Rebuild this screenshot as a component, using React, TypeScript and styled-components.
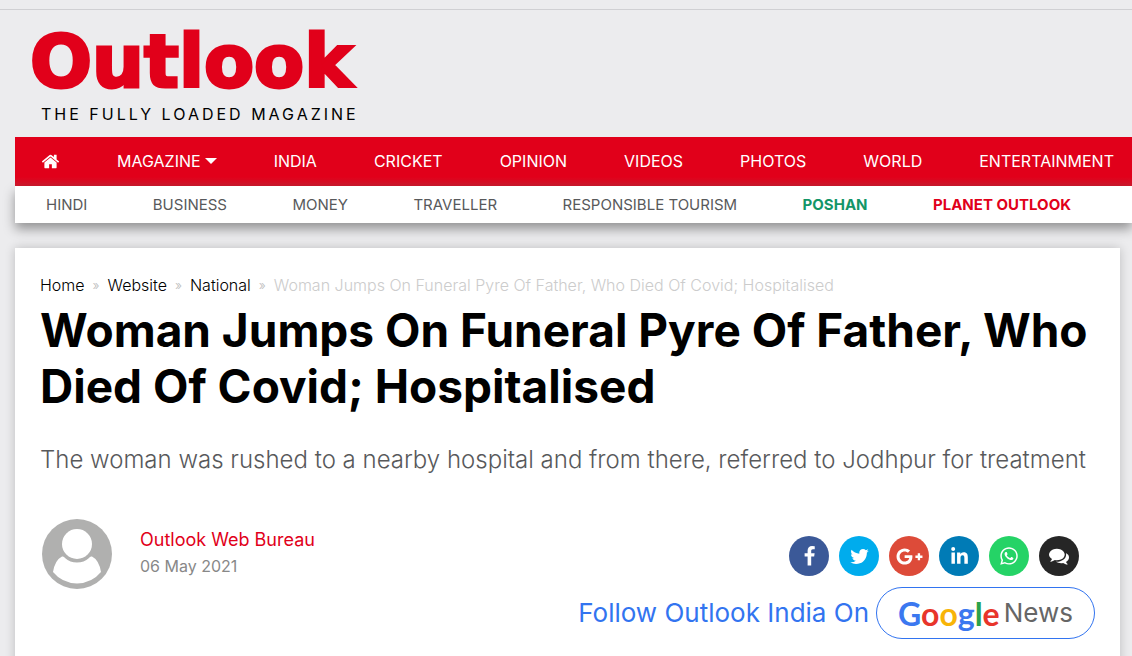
import React from "react";
import styled, { createGlobalStyle } from "styled-components";
import { FaGooglePlusG, FaLinkedinIn, FaWhatsapp } from "react-icons/fa";

const GlobalStyle = createGlobalStyle`
  *, *::before, *::after { box-sizing: border-box; }
  body {
    margin: 0;
    background: #ececee;
    color: #000;
    font-family: Inter, "Liberation Sans", sans-serif;
    overflow-x: hidden;
  }
  a { color: inherit; text-decoration: none; }
  h1, p, ol, ul { margin: 0; padding: 0; }
  ol, ul { list-style: none; }
`;

const TopStrip = styled.div`
  height: 10px;
  border-bottom: 1px solid #d0d0d3;
`;

const Masthead = styled.header`
  display: flex;
  flex-direction: column;
  align-items: flex-start;
  height: 127px;
  padding: 16px 0 0 30px;
`;

const Logo = styled.a`
  color: #e1001a;
  font-family: "DejaVu Sans", Inter, sans-serif;
  font-size: 73px;
  font-weight: 700;
  line-height: 72px;
  -webkit-text-stroke: 3px #e1001a;
`;

const Tagline = styled.p`
  padding-left: 11px;
  font-size: 16px;
  line-height: 32px;
  letter-spacing: 3px;
`;

const MainNav = styled.nav`
  margin-left: 15px;
  padding: 0 18px 0 26px;
  background: linear-gradient(#e1001a 40px, #cf1a2e 49px);
  color: #fff;
`;

const NavList = styled.ul<{ $height: number; $size: number }>`
  display: flex;
  align-items: center;
  justify-content: space-between;
  height: ${(p) => p.$height}px;
  padding-bottom: 1px;
  font-size: ${(p) => p.$size}px;
  white-space: nowrap;
`;

const NavLink = styled.a<{ $tone?: string }>`
  display: flex;
  align-items: center;
  gap: 4px;
  color: ${(p) => p.$tone || "inherit"};
  font-weight: ${(p) => (p.$tone ? 700 : 400)};
`;

const Caret = styled.span`
  border: 6px solid transparent;
  border-top-color: #fff;
  border-bottom-width: 0;
`;

const SubNav = styled.nav`
  margin-left: 15px;
  padding: 0 61px 0 31px;
  background: #fff;
  color: #58595b;
  box-shadow: 0 6px 12px rgba(0, 0, 0, 0.38);
`;

const Article = styled.main`
  min-height: 440px;
  margin: 25px 12px 0 15px;
  padding: 24px 25px;
  background: #fff;
  box-shadow: 0 0 10px rgba(0, 0, 0, 0.2);
`;

const Breadcrumbs = styled.ol`
  display: flex;
  gap: 8px;
  font-size: 16px;
  line-height: 26px;
  white-space: nowrap;
`;

const Crumb = styled.li<{ $current?: boolean }>`
  display: flex;
  gap: 8px;
  color: ${(p) => (p.$current ? "#ccc" : "#000")};
  font-weight: 300;
  &:not(:last-child)::after {
    content: "»";
    color: #bbb;
    font-size: 13px;
  }
`;

const Headline = styled.h1`
  padding-top: 4px;
  font-size: 46px;
  font-weight: 700;
  line-height: 56px;
`;

const Summary = styled.p`
  padding-top: 30px;
  color: #58595b;
  font-size: 24px;
  font-weight: 300;
  line-height: 32px;
`;

const Meta = styled.div`
  display: flex;
  justify-content: space-between;
  padding: 43px 16px 0 0;
`;

const Author = styled.div`
  display: flex;
  gap: 28px;
  padding-left: 2px;
`;

const AuthorText = styled.div`
  height: 68px;
  padding-top: 8px;
  color: #888;
  font-size: 16px;
  line-height: 26px;
`;

const AuthorName = styled.a`
  display: block;
  color: #e1001a;
  font-size: 18px;
`;

const Shares = styled.div`
  display: flex;
  gap: 10px;
  padding-top: 17px;
`;

const ShareButton = styled.button<{ $bg: string }>`
  display: flex;
  align-items: center;
  justify-content: center;
  width: 40px;
  height: 40px;
  padding: 0;
  border: 0;
  border-radius: 50%;
  background: ${(p) => p.$bg};
  color: #fff;
  cursor: pointer;
`;

const Follow = styled.div`
  display: flex;
  align-items: center;
  justify-content: flex-end;
  gap: 7px;
  color: #3274f0;
  font-size: 26px;
  line-height: 52px;
  white-space: nowrap;
`;

const NewsPill = styled.a`
  display: flex;
  align-items: center;
  justify-content: center;
  gap: 4px;
  width: 219px;
  height: 52px;
  border: 1px solid #3274f0;
  border-radius: 26px;
  color: #666;
`;

const GoogleWord = styled.span`
  padding-top: 2px;
  font-family: Lato, sans-serif;
  font-size: 32px;
  font-weight: 700;
`;

const Ink = styled.span<{ $c: string }>`
  color: ${(p) => p.$c};
`;

const paths = {
  home: "M1472 992v480q0 26-19 45t-45 19h-384v-384h-256v384h-384q-26 0-45-19t-19-45v-480q0-1 .5-3t.5-3l575-474 575 474q1 2 1 6zm223-69l-62 74q-8 9-21 11h-3q-13 0-21-7l-692-577-692 577q-12 8-24 7-13-2-21-11l-62-74q-8-10-7-23.5t11-21.5l719-599q32-26 76-26t76 26l244 204v-195q0-14 9-23t23-9h192q14 0 23 9t9 23v408l219 182q10 8 11 21.5t-7 23.5z",
  facebook:
    "M1343 12v264h-157q-86 0-116 36t-30 108v189h293l-39 296h-254v759h-306v-759h-255v-296h255v-218q0-186 104-288.5t277-102.5q147 0 228 12z",
  twitter:
    "M1684 408q-67 98-162 167 1 14 1 42 0 130-38 259.5t-115.5 248.5-184.5 210.5-258 146-323 54.5q-271 0-496-145 35 4 78 4 225 0 401-138-105-2-188-64.5t-114-159.5q33 5 61 5 43 0 85-11-112-23-185.5-111.5t-73.5-205.5v-4q68 38 146 41-66-44-105-115t-39-154q0-88 44-163 121 149 294.5 238.5t371.5 99.5q-8-38-8-74 0-134 94.5-228.5t228.5-94.5q140 0 236 102 109-21 205-78-37 115-142 178 93-10 186-50z",
  comments:
    "M1408 768q0 139-94 257t-256.5 186.5-353.5 68.5q-86 0-176-16-124 88-278 128-36 9-86 16h-3q-11 0-20.5-8t-11.5-21q-1-3-1-6.5t.5-6.5 2-6l2.5-5 3.5-5.5 4-5 4.5-5 4-4.5q5-6 23-25t26-29.5 22.5-29 25-38.5 20.5-44q-124-72-195-177t-71-224q0-139 94-257t256.5-186.5 353.5-68.5 353.5 68.5 256.5 186.5 94 257zm384 256q0 120-71 224.5t-195 176.5q10 24 20.5 44t25 38.5 22.5 29 26 29.5 23 25q1 1 4 4.5t4.5 5 4 5 3.5 5.5l2.5 5 2 6 .5 6.5-1 6.5q-3 14-13 22t-22 7q-50-7-86-16-154-40-278-128-90 16-176 16-271 0-472-132 58 4 88 4 161 0 309-45t264-129q125-92 192-212t67-254q0-77-23-152 129 71 204 178t75 230z",
};

const Glyph = ({ d, size }: { d: string; size: number }) => (
  <svg width={size} height={size} viewBox="0 0 1792 1792" fill="currentColor" aria-hidden="true">
    <path d={d} />
  </svg>
);

const Avatar = () => (
  <svg width="70" height="70" viewBox="0 0 70 70" aria-hidden="true">
    <circle cx="35" cy="35" r="35" fill="#b0b0af" />
    <circle cx="35" cy="25" r="15" fill="#fff" />
    <path
      d="M20 37.5Q22 37 23 39Q28 43.500 35 43.500Q42 43.500 47 39Q48 37 50 37.500Q57 41 59 53Q50 64 35 64.500Q20 64 11 53Q13 41 20 37.500Z"
      fill="#fff"
    />
  </svg>
);

const AvatarFrame = styled.div`
  width: 70px;
  height: 68px;
`;

const sections = ["INDIA", "CRICKET", "OPINION", "VIDEOS", "PHOTOS", "WORLD", "ENTERTAINMENT"];

const subSections: { label: string; tone?: string }[] = [
  { label: "HINDI" },
  { label: "BUSINESS" },
  { label: "MONEY" },
  { label: "TRAVELLER" },
  { label: "RESPONSIBLE TOURISM" },
  { label: "POSHAN", tone: "#139668" },
  { label: "PLANET OUTLOOK", tone: "#e1001a" },
];

const shares = [
  { label: "Facebook", bg: "#3b5998", icon: <Glyph d={paths.facebook} size={21} /> },
  { label: "Twitter", bg: "#00aced", icon: <Glyph d={paths.twitter} size={21} /> },
  { label: "Google Plus", bg: "#dd4b39", icon: <FaGooglePlusG size={27} /> },
  { label: "LinkedIn", bg: "#007bb6", icon: <FaLinkedinIn size={19} /> },
  { label: "WhatsApp", bg: "#25d366", icon: <FaWhatsapp size={20} /> },
  { label: "Comments", bg: "#262626", icon: <Glyph d={paths.comments} size={20} /> },
];

const title = "Woman Jumps On Funeral Pyre Of Father, Who Died Of Covid; Hospitalised";

export default function App() {
  return (
    <>
      <GlobalStyle />
      <TopStrip />
      <Masthead>
        <Logo href="#">Outlook</Logo>
        <Tagline>THE FULLY LOADED MAGAZINE</Tagline>
      </Masthead>
      <MainNav aria-label="Main">
        <NavList $height={49} $size={16}>
          <li>
            <NavLink href="#" aria-label="Home">
              <Glyph d={paths.home} size={19} />
            </NavLink>
          </li>
          <li>
            <NavLink href="#">
              MAGAZINE
              <Caret />
            </NavLink>
          </li>
          {sections.map((s) => (
            <li key={s}>
              <NavLink href="#">{s}</NavLink>
            </li>
          ))}
        </NavList>
      </MainNav>
      <SubNav aria-label="More">
        <NavList $height={37} $size={15}>
          {subSections.map((s) => (
            <li key={s.label}>
              <NavLink href="#" $tone={s.tone}>
                {s.label}
              </NavLink>
            </li>
          ))}
        </NavList>
      </SubNav>
      <Article>
        <Breadcrumbs>
          {["Home", "Website", "National"].map((c) => (
            <Crumb key={c}>
              <a href="#">{c}</a>
            </Crumb>
          ))}
          <Crumb $current>{title}</Crumb>
        </Breadcrumbs>
        <Headline>{title}</Headline>
        <Summary>
          The woman was rushed to a nearby hospital and from there, referred to Jodhpur for treatment
        </Summary>
        <Meta>
          <Author>
            <AvatarFrame>
              <Avatar />
            </AvatarFrame>
            <AuthorText>
              <AuthorName href="#">Outlook Web Bureau</AuthorName>
              <time dateTime="2021-05-06">06 May 2021</time>
            </AuthorText>
          </Author>
          <Shares>
            {shares.map((s) => (
              <ShareButton key={s.label} type="button" $bg={s.bg} aria-label={s.label}>
                {s.icon}
              </ShareButton>
            ))}
          </Shares>
        </Meta>
        <Follow>
          <span>Follow Outlook India On</span>
          <NewsPill href="#">
            <GoogleWord>
              <Ink $c="#3b78f0">G</Ink>
              <Ink $c="#e8352b">o</Ink>
              <Ink $c="#f8b408">o</Ink>
              <Ink $c="#3b78f0">g</Ink>
              <Ink $c="#2ba24c">l</Ink>
              <Ink $c="#e8352b">e</Ink>
            </GoogleWord>
            <span>News</span>
          </NewsPill>
        </Follow>
      </Article>
    </>
  );
}
